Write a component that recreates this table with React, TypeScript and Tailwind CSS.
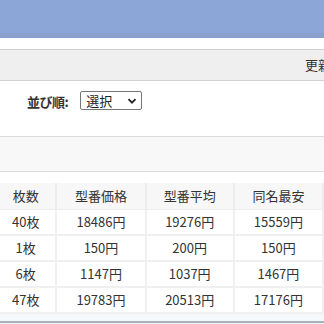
import React from "react";

const rows = [
  { count: "40枚", model: "18486円", avg: "19276円", low: "15559円" },
  { count: "1枚", model: "150円", avg: "200円", low: "150円" },
  { count: "6枚", model: "1147円", avg: "1037円", low: "1467円" },
  { count: "47枚", model: "19783円", avg: "20513円", low: "17176円" },
];

const headers = ["枚数", "型番価格", "型番平均", "同名最安"];
const widths = ["w-[62px]", "w-[91px]", "w-[90px]", "w-[91px]"];

export default function App() {
  return (
    <div className="h-[324px] w-[324px] overflow-hidden bg-white font-['Meiryo','Noto_Sans_CJK_JP',sans-serif] text-[13px] text-[#333]">
      {/* header band */}
      <div className="h-[38px] bg-[#8ba6d7] border-b-[5px] border-[#8aa1cf]" />
      <div className="h-[11px]" />

      {/* info bar */}
      <div className="flex h-[32px] items-center overflow-hidden border-y border-[#d2d2d2] bg-[#efefef] pl-[305px]">
        <span className="whitespace-nowrap">更新</span>
      </div>

      {/* sort row */}
      <div className="flex h-[55px] items-start pl-[27px] pt-[10px]">
        <span className="mt-[1px] font-bold tracking-[-0.5px]">並び順:</span>
        <div className="ml-[12px] flex h-[19px] w-[62px] items-center justify-between rounded-[2px] border border-[#767676] bg-white pl-[5px] pr-[4px] text-[13px] leading-none text-[#222]">
          <span>選択</span>
          <svg width="10" height="10" viewBox="0 0 10 10" className="text-[#222]">
            <path d="M1.5 3.2 L5 6.7 L8.5 3.2" fill="none" stroke="currentColor" strokeWidth="1.8" />
          </svg>
        </div>
      </div>

      {/* filter bar */}
      <div className="h-[36px] border-y border-[#dcdcdc] bg-[#f8f8f8]" />
      <div className="h-[11px]" />

      {/* table */}
      <table className="-ml-[4px] border-collapse">
        <thead>
          <tr className="h-[26px] bg-[#f7f7f7]">
            {headers.map((h, i) => (
              <th
                key={h}
                className={`${widths[i]} border-b border-r-2 border-[#ececec] p-0 text-center font-normal`}
              >
                {h}
              </th>
            ))}
          </tr>
        </thead>
        <tbody>
          {rows.map((r) => (
            <tr key={r.count} className="h-[26px]">
              {[r.count, r.model, r.avg, r.low].map((v, i) => (
                <td
                  key={i}
                  className={`${widths[i]} border-b-2 border-r-2 border-[#f0f0f0] p-0 text-center`}
                >
                  {v}
                </td>
              ))}
            </tr>
          ))}
        </tbody>
      </table>

      <div className="h-[7px] bg-[#f6f9fc]" />
      <div className="h-[10px] border-t-2 border-[#a9b1b9] bg-[#eef2f6]" />
    </div>
  );
}
